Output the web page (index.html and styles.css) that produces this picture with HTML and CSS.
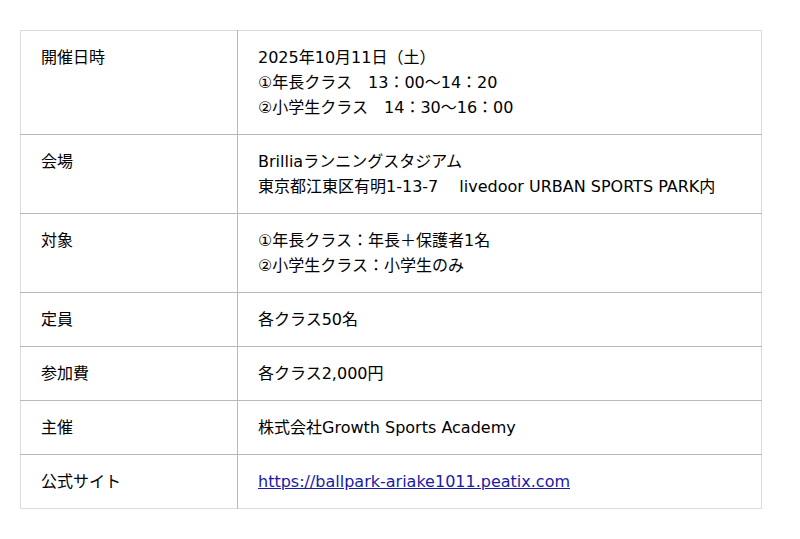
FILE: index.html
```html
<!DOCTYPE html>
<html lang="ja">
<head>
<meta charset="utf-8">
<link rel="stylesheet" href="styles.css">
</head>
<body>
<div class="wrap">
<table class="info">
  <tr>
    <th>開催日時</th>
    <td>2025年10月11日（土）<br>①年長クラス　13：00～14：20<br>②小学生クラス　14：30～16：00</td>
  </tr>
  <tr>
    <th>会場</th>
    <td>Brilliaランニングスタジアム<br>東京都江東区有明1-13-7　 livedoor URBAN SPORTS PARK内</td>
  </tr>
  <tr>
    <th>対象</th>
    <td>①年長クラス：年長＋保護者1名<br>②小学生クラス：小学生のみ</td>
  </tr>
  <tr>
    <th>定員</th>
    <td>各クラス50名</td>
  </tr>
  <tr>
    <th>参加費</th>
    <td>各クラス2,000円</td>
  </tr>
  <tr>
    <th>主催</th>
    <td>株式会社Growth Sports Academy</td>
  </tr>
  <tr>
    <th>公式サイト</th>
    <td><a class="link" href="#">https://ballpark-ariake1011.peatix.com</a></td>
  </tr>
</table>
</div>
</body>
</html>
```

FILE: styles.css
```css
html, body {
  margin: 0;
  padding: 0;
  background: #ffffff;
}
.wrap {
  padding: 30px 20px;
}
.info {
  width: 742px;
  border-collapse: collapse;
  font-family: "DejaVu Sans", "Noto Sans CJK JP", sans-serif;
  font-size: 16px;
  line-height: 25px;
  color: #000;
  border: 1px solid #dcdcdc;
}
.info th,
.info td {
  text-align: left;
  vertical-align: top;
  font-weight: normal;
  padding: 14px 20px;
  border-top: 1px solid #b8b8b8;
}
.info tr:first-child th,
.info tr:first-child td {
  border-top: 1px solid #dcdcdc;
}
.info th {
  width: 176px;
  border-right: 1px solid #b8b8b8;
}
.link {
  color: #1a1aa6;
  text-decoration: underline;
}
```
